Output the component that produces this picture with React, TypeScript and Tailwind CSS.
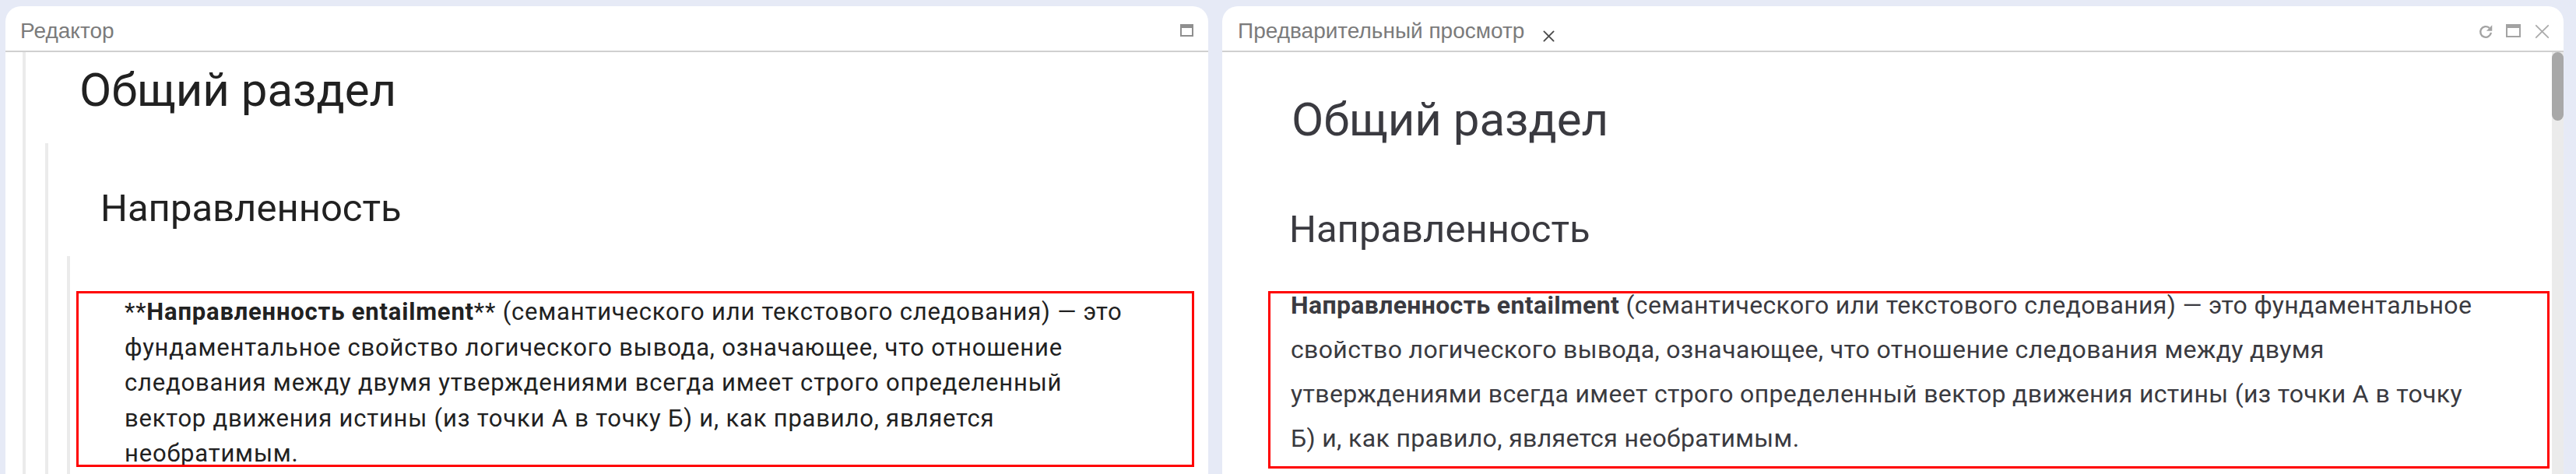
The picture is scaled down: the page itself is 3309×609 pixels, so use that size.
import React from 'react';

const MaxIcon = ({ w, h, color }: { w: number; h: number; color: string }) => (
  <svg width={w} height={h} viewBox={`0 0 ${w} ${h}`}>
    <rect x="1" y="1" width={w - 2} height={h - 2} fill="white" stroke={color} strokeWidth="2" />
    <rect x="1" y="1" width={w - 2} height="4" fill={color} />
  </svg>
);

const CrossIcon = ({ size, color, stroke }: { size: number; color: string; stroke: number }) => (
  <svg width={size} height={size} viewBox="0 0 16 16">
    <path d="M1.5 1.5L14.5 14.5M14.5 1.5L1.5 14.5" stroke={color} strokeWidth={stroke} strokeLinecap="round" />
  </svg>
);

const RefreshIcon = () => (
  <svg width="22" height="22" viewBox="0 0 24 24">
    <path d="M19.5 13a7.5 7.5 0 1 1-2.4-6.6" fill="none" stroke="#a3a3a3" strokeWidth="2.6" />
    <path d="M21 2.5v8h-8z" fill="#a3a3a3" />
  </svg>
);

const Header = ({ children }: { children: React.ReactNode }) => (
  <div className="flex h-[59px] shrink-0 items-start border-b-2 border-[#d0d0d0] pl-[19px] pr-[18px] font-['Liberation_Sans',Arial,sans-serif]">
    {children}
  </div>
);

const EditorPanel = () => (
  <div className="flex h-full w-[1545px] shrink-0 flex-col overflow-hidden rounded-t-[20px] bg-white">
    <Header>
      <span className="mt-[18px] text-[28px] leading-[28px] text-[#7b7b7b]">Редактор</span>
      <div className="ml-auto mt-[23px] mr-[1px]">
        <MaxIcon w={17} h={16} color="#8f8f8f" />
      </div>
    </Header>
    <div className="relative flex-1 font-['Roboto',sans-serif] text-[#212121]">
      <div className="ml-[22px] h-full border-l-4 border-[#ebebeb]">
        <h1 className="pl-[69px] pt-[13px] text-[60px] leading-[72px] font-normal">Общий раздел</h1>
        <div className="mt-[32px] ml-[25px] border-l-4 border-[#ebebeb] pt-[55px] pb-[40px]">
          <h2 className="pl-[67px] text-[49px] leading-[58px] font-normal">Направленность</h2>
          <div className="mt-[32px] ml-[24px] border-l-4 border-[#ebebeb] pt-[49px] pb-[40px] pl-[70px]">
            <p className="whitespace-nowrap text-[31px] leading-[45.5px] tracking-[0.8px]">
              **<b className="font-bold">Направленность entailment</b>** (семантического или текстового следования) — это
              <br />
              фундаментальное свойство логического вывода, означающее, что отношение
              <br />
              следования между двумя утверждениями всегда имеет строго определенный
              <br />
              вектор движения истины (из точки А в точку Б) и, как правило, является
              <br />
              необратимым.
            </p>
          </div>
        </div>
      </div>
      <div className="pointer-events-none absolute left-[91px] top-[307px] h-[226px] w-[1436px] border-[3px] border-[#ff0000]" />
    </div>
  </div>
);

const PreviewPanel = () => (
  <div className="flex h-full w-[1723px] shrink-0 flex-col overflow-hidden rounded-t-[20px] bg-white">
    <Header>
      <span className="mt-[18px] pl-[1px] text-[28px] leading-[28px] text-[#7b7b7b]">Предварительный просмотр</span>
      <div className="mt-[31px] ml-[24px]">
        <CrossIcon size={15} color="#4a4a4a" stroke={2} />
      </div>
      <div className="ml-auto mt-[22px] flex items-start">
        <RefreshIcon />
        <div className="mt-[1px] ml-[15px]">
          <MaxIcon w={19} h={17} color="#a3a3a3" />
        </div>
        <div className="ml-[18px] mt-[1px]">
          <CrossIcon size={19} color="#ababab" stroke={1.5} />
        </div>
      </div>
    </Header>
    <div className="relative flex flex-1 font-['Roboto',sans-serif] text-[#3a3a40]">
      <div className="min-w-0 flex-1">
        <h1 className="pl-[89px] pt-[51px] text-[60px] leading-[72px] font-normal">Общий раздел</h1>
        <h2 className="mt-[76px] pl-[86px] text-[49px] leading-[58px] font-normal">Направленность</h2>
        <p className="mt-[40px] ml-[88px] whitespace-nowrap text-[32px] leading-[57px] tracking-[0.35px]">
          <b className="font-bold">Направленность entailment</b> (семантического или текстового следования) — это фундаментальное
          <br />
          свойство логического вывода, означающее, что отношение следования между двумя
          <br />
          утверждениями всегда имеет строго определенный вектор движения истины (из точки А в точку
          <br />
          Б) и, как правило, является необратимым.
        </p>
      </div>
      <div className="w-[15px] shrink-0 bg-[#ebebeb]">
        <div className="h-[88px] w-full rounded-full bg-[#a8a8a8]" />
      </div>
      <div className="pointer-events-none absolute left-[59px] top-[307px] h-[228px] w-[1646px] border-[3px] border-[#ff0000]" />
    </div>
  </div>
);

export default function App() {
  return (
    <div className="flex h-[609px] w-[3309px] gap-[18px] overflow-hidden bg-[#e6eaf6] pl-[7px] pt-[8px]">
      <EditorPanel />
      <PreviewPanel />
    </div>
  );
}
